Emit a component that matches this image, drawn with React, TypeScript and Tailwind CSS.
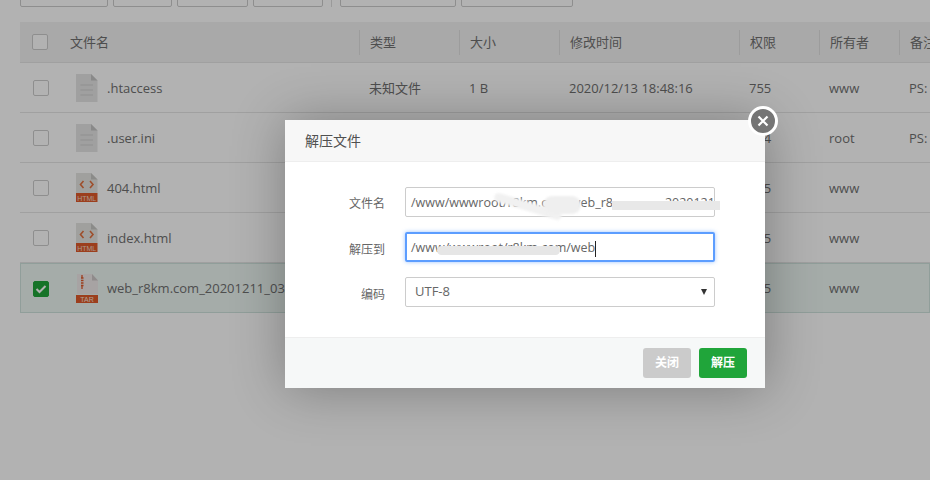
import React from "react";

const font = { fontFamily: '"Open Sans","Noto Sans CJK SC",sans-serif' };

function Box({ checked }: { checked?: boolean }) {
  return (
    <div className={"w-[16px] h-[16px] rounded-[2px] border flex items-center justify-center " + (checked ? "bg-[#20a53a] border-[#20a53a]" : "bg-white border-[#cccccc]")}>
      {checked && (
        <svg width="12" height="10" viewBox="0 0 12 10" fill="none">
          <path d="M1.5 5 L4.5 8 L10.5 2" stroke="white" strokeWidth="2" />
        </svg>
      )}
    </div>
  );
}

function TextIcon() {
  return (
    <svg width="22" height="28" viewBox="0 0 22 28">
      <path d="M0 0 H15 L21.5 6.5 V28 H0 Z" fill="#e5e5e5" />
      <path d="M15 0 L21.5 6.5 H15 Z" fill="#c4c4c4" />
      <path d="M4.5 11 H17 M4.5 16 H17 M4.5 21 H17" stroke="#cfcfcf" strokeWidth="1.2" />
    </svg>
  );
}

function HtmlIcon() {
  return (
    <svg width="22" height="29" viewBox="0 0 22 29">
      <path d="M0 0 H15 L21.5 6.5 V20 H0 Z" fill="#e6e6e2" />
      <path d="M15 0 L21.5 6.5 H15 Z" fill="#c8c8c4" />
      <path d="M7.5 8 L4.5 11.5 L7.5 15 M14 8 L17 11.5 L14 15" fill="none" stroke="#e2703f" strokeWidth="1.6" />
      <rect x="0" y="20" width="21.5" height="9" fill="#e0592a" />
      <text x="10.7" y="27.5" textAnchor="middle" fontSize="7" fill="#f3d9cd" fontFamily="Liberation Sans, sans-serif">HTML</text>
    </svg>
  );
}

function TarIcon() {
  return (
    <svg width="23" height="29" viewBox="0 0 23 29">
      <path d="M1 0 H16 L22 6.5 V20 H1 Z" fill="#efeaea" />
      <path d="M16 0 L22 6.5 H16 Z" fill="#cdc8c8" />
      <path d="M6 1 V4 M5 4 H7.5 M5 6.5 H7.5 M5 9 H7.5 M5 11.5 H7.5 M6 12 V15" stroke="#e0592a" strokeWidth="1.3" fill="none" />
      <rect x="0" y="21" width="22" height="8" fill="#e0592a" />
      <text x="11" y="28" textAnchor="middle" fontSize="7" fill="#f8e4da" fontFamily="Liberation Sans, sans-serif">TAR</text>
    </svg>
  );
}

const cols = "grid grid-cols-[49px_290px_100px_100px_180px_80px_80px_1fr]";

const headers = ["文件名", "类型", "大小", "修改时间", "权限", "所有者", "备注"];

const rows = [
  { icon: <TextIcon />, name: ".htaccess", type: "未知文件", size: "1 B", time: "2020/12/13 18:48:16", perm: "755", owner: "www", note: "PS:" },
  { icon: <TextIcon />, name: ".user.ini", type: "", size: "", time: "", perm: "644", owner: "root", note: "PS:" },
  { icon: <HtmlIcon />, name: "404.html", type: "", size: "", time: "", perm: "755", owner: "www", note: "" },
  { icon: <HtmlIcon />, name: "index.html", type: "", size: "", time: "", perm: "755", owner: "www", note: "" },
  { icon: <TarIcon />, name: "web_r8km.com_20201211_033", type: "", size: "", time: "", perm: "755", owner: "www", note: "", selected: true },
];

function Smear({ className }: { className: string }) {
  return <div className={"absolute pointer-events-none " + className} />;
}

export default function App() {
  return (
    <div className="relative w-[930px] h-[480px] overflow-hidden bg-white text-[13px] text-[#707070]" style={font}>
      {/* toolbar, scrolled past the top */}
      <div className="h-[7px] pl-[20px] flex items-end gap-[5px] overflow-hidden">
        {[88, 59, 71, 70].map((w, i) => (
          <div key={i} className="h-[30px] shrink-0 border border-[#cccccc] rounded-[2px] bg-white" style={{ width: w }} />
        ))}
        <div className="w-px h-[30px] shrink-0 ml-[3px] mr-[3px] bg-[#dddddd]" />
        {[116, 112].map((w, i) => (
          <div key={i} className="h-[30px] shrink-0 border border-[#cccccc] rounded-[2px] bg-white" style={{ width: w }} />
        ))}
      </div>

      {/* table */}
      <div className="mt-[15px] ml-[20px]">
        <div className={cols + " h-[41px] items-center bg-[#f2f2f2] border-b border-[#e6e6e6]"}>
          <div className="pl-[12px]"><Box /></div>
          {headers.map((h, i) => (
            <div key={h} className={"h-[25px] flex items-center pt-[2px] text-[13px] text-[#707070] whitespace-nowrap overflow-hidden " + (i > 0 ? "pl-[10px] border-l border-[#e0e0e0]" : "pl-[1px]")}>
              {h}
            </div>
          ))}
        </div>
        {rows.map((r) => (
          <div key={r.name} className={cols + " h-[50px] items-center " + (r.selected ? "bg-[#ecf6f3] outline outline-1 -outline-offset-1 outline-[#cfe3dd]" : "border-b border-[#e6e6e6]")}>
            <div className="pl-[13px] pt-[1px]"><Box checked={r.selected} /></div>
            <div className="flex items-center whitespace-nowrap overflow-hidden">
              <div className="w-[38px] pl-[7px] shrink-0 flex">{r.icon}</div>
              <span className="pt-[2px]">{r.name}</span>
            </div>
            <div className="pl-[10px] pt-[2px]">{r.type}</div>
            <div className="pl-[10px] pt-[2px]">{r.size}</div>
            <div className="pl-[10px] pt-[2px] whitespace-nowrap">{r.time}</div>
            <div className="pl-[10px] pt-[2px]">{r.perm}</div>
            <div className="pl-[10px] pt-[2px]">{r.owner}</div>
            <div className="pl-[10px] pt-[2px]">{r.note}</div>
          </div>
        ))}
      </div>

      {/* overlay */}
      <div className="absolute inset-0 bg-black/30" />

      {/* dialog */}
      <div className="absolute left-[285px] top-[120px] w-[480px] h-[268px] bg-white flex flex-col shadow-[1px_1px_50px_rgba(0,0,0,0.3)]">
        <div className="h-[42px] shrink-0 bg-[#f7f7f7] border-b border-[#eeeeee] pl-[20px] flex items-center text-[14px] text-[#505050]">解压文件</div>

        <div className="flex-1 pt-[25px] flex flex-col gap-[15px] relative">
          <div className="flex items-center h-[30px]">
            <div className="w-[100px] pt-[3px] text-right text-[#666666] text-[12px]">文件名</div>
            <div className="ml-[20px] w-[310px] h-[30px] border border-[#cccccc] rounded-[2px] pl-[5px] pt-[2px] flex items-center text-[12.5px] text-[#666666] whitespace-nowrap overflow-hidden">
              /www/wwwroot/r8km.com/web_r8km.com_20201211
            </div>
          </div>
          <div className="flex items-center h-[30px]">
            <div className="w-[100px] pt-[5px] text-right text-[#666666] text-[12px]">解压到</div>
            <div className="ml-[20px] w-[310px] h-[30px] border-2 border-[#5c9dff] rounded-[2px] pl-[4px] pt-[3px] flex items-center text-[12.5px] text-[#666666] whitespace-nowrap overflow-hidden shadow-[0_0_4px_rgba(92,157,255,0.6)]">
              /www/wwwroot/r8km.com/web<span className="w-px h-[16px] bg-[#222222]" />
            </div>
          </div>
          <div className="flex items-center h-[30px]">
            <div className="w-[100px] pt-[5px] text-right text-[#666666] text-[12px]">编码</div>
            <div className="ml-[20px] w-[310px] h-[30px] border border-[#cccccc] rounded-[2px] pl-[9px] pr-[7px] flex items-center justify-between text-[13px] text-[#666666]">
              <span>UTF-8</span>
              <svg width="6" height="6" viewBox="0 0 6 6"><path d="M0 0 H6 L3 6 Z" fill="#333333" /></svg>
            </div>
          </div>

          {/* scribbles that hide the path in the picture */}
          <Smear className="left-[208px] top-[40px] w-[70px] h-[9px] bg-[#f1f1f1] rotate-[17deg] rounded-full blur-[1px]" />
          <Smear className="left-[258px] top-[34px] w-[38px] h-[18px] bg-[#efefef] rounded-full blur-[1px]" />
          <Smear className="left-[327px] top-[32px] w-[50px] h-[16px] bg-white" />
          <Smear className="left-[327px] top-[39px] w-[108px] h-[9px] bg-[#e8e8e8]" />
          <Smear className="left-[152px] top-[84px] w-[123px] h-[9px] bg-[#e6e6e6] rounded-full blur-[0.5px]" />
        </div>

        <div className="h-[51px] shrink-0 bg-[#f6f8f8] border-t border-[#eeeeee] flex items-center justify-end gap-[8px] pr-[18px]">
          <div className="w-[48px] h-[30px] rounded-[3px] bg-[#cbcbcb] text-white text-[12px] font-bold flex items-center justify-center">关闭</div>
          <div className="w-[48px] h-[30px] rounded-[3px] bg-[#20a53a] text-white text-[12px] font-bold flex items-center justify-center">解压</div>
        </div>

        <div className="absolute -top-[14px] -right-[13px] w-[30px] h-[30px] rounded-full border-[3px] border-white bg-[#757575] flex items-center justify-center">
          <svg width="12" height="12" viewBox="0 0 12 12"><path d="M1.5 1.5 L10.5 10.5 M10.5 1.5 L1.5 10.5" stroke="white" strokeWidth="2.2" /></svg>
        </div>
      </div>
    </div>
  );
}
